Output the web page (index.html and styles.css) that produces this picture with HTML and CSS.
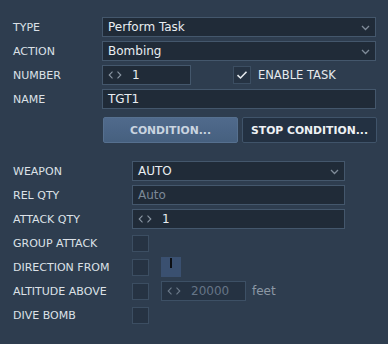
FILE: index.html
```html
<!DOCTYPE html>
<html lang="en">
<head>
    <meta charset="UTF-8">
    <title>Task Panel</title>
    <link rel="stylesheet" href="styles.css">
</head>
<body>
    <div class="panel">
        <div class="section top">
            <div class="row">
                <span class="label">TYPE</span>
                <div class="field select wide">Perform Task<svg class="chev" width="9" height="6" viewBox="0 0 9 6"><path d="M1 1 L4.5 4.5 L8 1" fill="none" stroke="#7f8b99" stroke-width="1.3"/></svg></div>
            </div>
            <div class="row">
                <span class="label">ACTION</span>
                <div class="field select wide">Bombing<svg class="chev" width="9" height="6" viewBox="0 0 9 6"><path d="M1 1 L4.5 4.5 L8 1" fill="none" stroke="#7f8b99" stroke-width="1.3"/></svg></div>
            </div>
            <div class="row">
                <span class="label">NUMBER</span>
                <div class="field spin number">
                    <svg class="arrows" width="14" height="8" viewBox="0 0 14 8"><path d="M4.5 0.6 L1.2 4 L4.5 7.4 M9.5 0.6 L12.8 4 L9.5 7.4" fill="none" stroke="#8a96a3" stroke-width="1.1"/></svg>1
                </div>
                <span class="check enable"><svg width="12" height="10" viewBox="0 0 12 10"><path d="M1.5 5.2 L4.5 8 L10.5 1.8" fill="none" stroke="#e6eaee" stroke-width="1.6"/></svg></span>
                <span class="check-label">ENABLE TASK</span>
            </div>
            <div class="row">
                <span class="label">NAME</span>
                <div class="field wide">TGT1</div>
            </div>
            <div class="buttons">
                <button class="btn primary">CONDITION...</button>
                <button class="btn">STOP CONDITION...</button>
            </div>
        </div>

        <div class="section bottom">
            <div class="row">
                <span class="label">WEAPON</span>
                <div class="field select mid">AUTO<svg class="chev" width="9" height="6" viewBox="0 0 9 6"><path d="M1 1 L4.5 4.5 L8 1" fill="none" stroke="#7f8b99" stroke-width="1.3"/></svg></div>
            </div>
            <div class="row">
                <span class="label">REL QTY</span>
                <div class="field mid muted">Auto</div>
            </div>
            <div class="row">
                <span class="label">ATTACK QTY</span>
                <div class="field spin mid">
                    <svg class="arrows" width="14" height="8" viewBox="0 0 14 8"><path d="M4.5 0.6 L1.2 4 L4.5 7.4 M9.5 0.6 L12.8 4 L9.5 7.4" fill="none" stroke="#8a96a3" stroke-width="1.1"/></svg>1
                </div>
            </div>
            <div class="row">
                <span class="label">GROUP ATTACK</span>
                <span class="check"></span>
            </div>
            <div class="row">
                <span class="label">DIRECTION FROM</span>
                <span class="check"></span>
                <span class="dial"><span class="needle"></span></span>
            </div>
            <div class="row">
                <span class="label">ALTITUDE ABOVE</span>
                <span class="check"></span>
                <div class="field spin alt dim">
                    <svg class="arrows" width="14" height="8" viewBox="0 0 14 8"><path d="M4.5 0.6 L1.2 4 L4.5 7.4 M9.5 0.6 L12.8 4 L9.5 7.4" fill="none" stroke="#6c7a8a" stroke-width="1.1"/></svg>20000
                </div>
                <span class="unit">feet</span>
            </div>
            <div class="row">
                <span class="label">DIVE BOMB</span>
                <span class="check"></span>
            </div>
        </div>
    </div>
</body>
</html>
```

FILE: styles.css
```css
body {
    margin: 0;
    background-color: #2e3d4f;
    font-family: "DejaVu Sans", sans-serif;
    font-size: 11px;
    color: #dce1e7;
}

.panel {
    width: 388px;
    height: 344px;
    padding: 17px 0 0 13px;
    box-sizing: border-box;
}

.section {
    display: flex;
    flex-direction: column;
    gap: 4px;
}

.bottom {
    margin-top: 18px;
}

.row {
    display: flex;
    align-items: center;
    height: 20px;
}

.label {
    flex: none;
}

.top .label {
    width: 89px;
}

.bottom .label {
    width: 119px;
}

.field {
    position: relative;
    height: 20px;
    box-sizing: border-box;
    border: 1px solid #44576c;
    background-color: #202b38;
    color: #e9edf1;
    padding: 0 0 0 5px;
    display: flex;
    align-items: center;
    font-size: 12px;
}

.wide {
    width: 274px;
}

.mid {
    width: 213px;
}

.number {
    width: 89px;
}

.select .chev {
    position: absolute;
    right: 5px;
    top: 7px;
}

.arrows {
    margin-right: 10px;
    flex: none;
}

.muted {
    color: #7b8897;
}

.check {
    flex: none;
    width: 17px;
    height: 17px;
    box-sizing: border-box;
    border: 1px solid #3c4e62;
    background-color: #263343;
    display: flex;
    align-items: center;
    justify-content: center;
}

.enable {
    width: 18px;
    height: 18px;
    margin-left: 42px;
}

.check-label {
    margin-left: 7px;
    font-size: 11.5px;
    color: #e6eaee;
}

.buttons {
    display: flex;
    gap: 4px;
    margin: 4px 0 0 90px;
}

.btn {
    width: 135px;
    height: 26px;
    border: 1px solid #40546a;
    border-radius: 2px;
    background-color: #233142;
    color: #eef1f4;
    font-family: "DejaVu Sans", sans-serif;
    font-weight: bold;
    font-size: 10.8px;
    padding: 0;
}

.btn.primary {
    background: linear-gradient(#506a8c, #46607f);
    border-color: #56708f;
    color: #c9d4e0;
}

.dial {
    position: relative;
    width: 20px;
    height: 20px;
    margin-left: 12px;
    background-color: #3a5070;
}

.needle {
    position: absolute;
    left: 9px;
    top: 1px;
    width: 2px;
    height: 10px;
    background-color: #0c0f14;
}

.alt {
    width: 85px;
    margin-left: 12px;
    background-color: #253242;
    border-color: #3d5065;
}

.dim {
    color: #667587;
}

.unit {
    margin-left: 6px;
    color: #8c98a5;
    font-size: 12px;
}
```
